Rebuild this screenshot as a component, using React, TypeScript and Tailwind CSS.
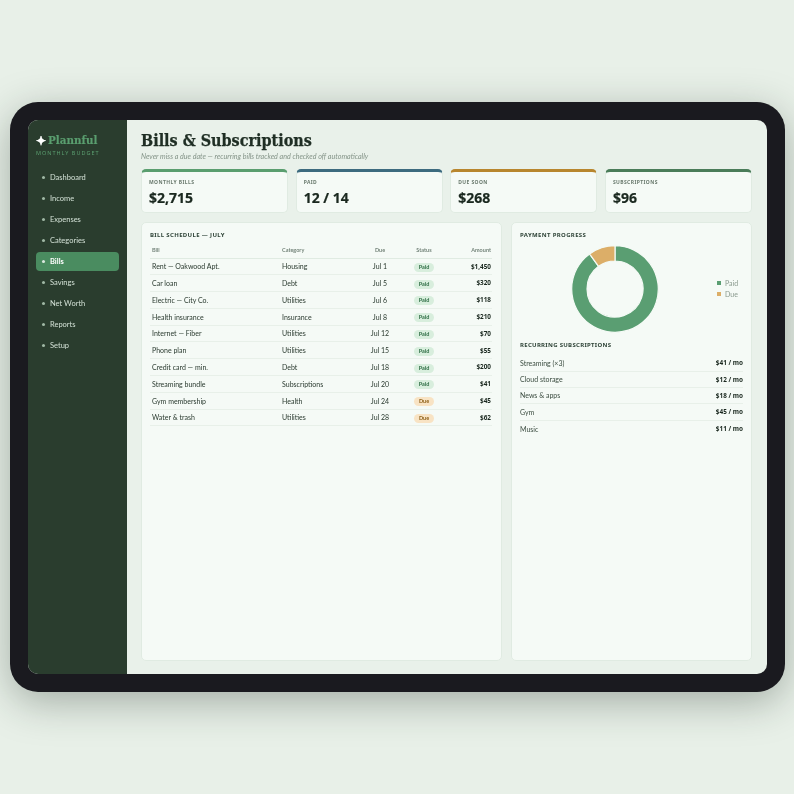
import React from 'react';

const navItems = ['Dashboard', 'Income', 'Expenses', 'Categories', 'Bills', 'Savings', 'Net Worth', 'Reports', 'Setup'];

const stats = [
  { label: 'Monthly Bills', value: '$2,715', bar: 'border-t-[#5a9e6f]' },
  { label: 'Paid', value: '12 / 14', bar: 'border-t-[#3d6b7f]' },
  { label: 'Due Soon', value: '$268', bar: 'border-t-[#b8862e]' },
  { label: 'Subscriptions', value: '$96', bar: 'border-t-[#4a7c59]' },
];

const bills = [
  ['Rent — Oakwood Apt.', 'Housing', 'Jul 1', 'Paid', '$1,450'],
  ['Car loan', 'Debt', 'Jul 5', 'Paid', '$320'],
  ['Electric — City Co.', 'Utilities', 'Jul 6', 'Paid', '$118'],
  ['Health insurance', 'Insurance', 'Jul 8', 'Paid', '$210'],
  ['Internet — Fiber', 'Utilities', 'Jul 12', 'Paid', '$70'],
  ['Phone plan', 'Utilities', 'Jul 15', 'Paid', '$55'],
  ['Credit card — min.', 'Debt', 'Jul 18', 'Paid', '$200'],
  ['Streaming bundle', 'Subscriptions', 'Jul 20', 'Paid', '$41'],
  ['Gym membership', 'Health', 'Jul 24', 'Due', '$45'],
  ['Water & trash', 'Utilities', 'Jul 28', 'Due', '$62'],
];

const subscriptions = [
  ['Streaming (×3)', '$41 / mo'],
  ['Cloud storage', '$12 / mo'],
  ['News & apps', '$18 / mo'],
  ['Gym', '$45 / mo'],
  ['Music', '$11 / mo'],
];

const Donut = () => (
  <svg width="90" height="90" viewBox="0 0 90 90">
    <path d="M45 1.7 A43.3 43.3 0 1 1 19.55 9.97 L28.55 22.35 A28 28 0 1 0 45 17 Z" fill="#5a9e72" stroke="#f4faf5" strokeWidth="1.2" />
    <path d="M45 1.7 A43.3 43.3 0 0 0 19.55 9.97 L28.55 22.35 A28 28 0 0 1 45 17 Z" fill="#dcae68" stroke="#f4faf5" strokeWidth="1.2" />
  </svg>
);

export default function App() {
  return (
    <div className="w-[794px] h-[794px] bg-[#e8f0e8] pl-[10px] pt-[102px] overflow-hidden antialiased font-['Lato','Noto_Sans',sans-serif]">
      {/* Device frame */}
      <div className="w-[775px] h-[590px] bg-[#1a1a1f] rounded-[28px] p-[18px] shadow-[0_10px_40px_rgba(30,45,35,0.34)]">
        <div className="w-full h-full flex rounded-[10px] overflow-hidden bg-[#e9f1ea] blur-[0.25px]">
          {/* Sidebar */}
          <aside className="w-[99px] shrink-0 bg-[#2a3d2e] px-2 pt-[14px]">
            <div className="flex items-center gap-[2px] h-[14px] font-['DejaVu_Serif',serif] font-stretch-condensed not-italic font-bold text-[11.5px] leading-none text-[#5a9e6f] [-webkit-text-stroke:0.15px_#5a9e6f]">
              <span className="text-white text-[12px] [-webkit-text-stroke:0.15px_#ffffff]">✦</span>
              <span>Plannful</span>
            </div>
            <div className="mt-[1px] text-[5.5px] leading-[8px] tracking-[1px] font-['Noto_Sans',sans-serif] text-[#5a9e6f] whitespace-nowrap">MONTHLY BUDGET</div>
            <nav className="mt-[11px] flex flex-col gap-[2px]">
              {navItems.map((item) => (
                <div
                  key={item}
                  className={`h-[19px] flex items-center gap-[5px] pl-[6px] rounded-[4px] text-[7.5px] ${
                    item === 'Bills' ? 'bg-[#4a8c60] text-white font-bold' : 'text-[#d2e0d5]'
                  }`}
                >
                  <span className={`w-[3px] h-[3px] rounded-full ${item === 'Bills' ? 'bg-white/80' : 'bg-[#a0b8a5]'}`} />
                  {item}
                </div>
              ))}
            </nav>
          </aside>

          {/* Main */}
          <main className="flex-1 min-w-0 flex flex-col pl-[14px] pr-[15px] pt-[11px] pb-[13px]">
            <h1 className="font-['DejaVu_Serif',serif] font-stretch-condensed not-italic font-bold text-[16px] leading-[20px] text-[#1f2e24] [-webkit-text-stroke:0.25px_#1f2e24]">Bills &amp; Subscriptions</h1>
            <p className="mt-[1px] text-[7.15px] leading-[10px] italic text-[#849488]">Never miss a due date — recurring bills tracked and checked off automatically</p>

            <div className="mt-[7px] grid grid-cols-4 gap-[7.5px]">
              {stats.map((stat) => (
                <div key={stat.label} className={`h-[44px] rounded-[5px] border border-[#e0ebe2] border-t-[3px] ${stat.bar} bg-[#f5faf6] px-[7px] pt-[5.5px]`}>
                  <div className="font-['Noto_Sans',sans-serif] text-[5px] leading-[8px] font-bold uppercase tracking-[0.4px] text-[#6a7a6e]">{stat.label}</div>
                  <div className="mt-[3.5px] font-['Noto_Sans',sans-serif] text-[14px] leading-[18px] font-bold text-[#1a281f] [-webkit-text-stroke:0.2px_#1a281f]">{stat.value}</div>
                </div>
              ))}
            </div>

            <div className="mt-[9px] flex-1 grid grid-cols-[361px_241px] gap-[9px]">
              {/* Bill schedule */}
              <section className="rounded-[5px] border border-[#e0ebe2] bg-[#f5faf6] px-[8px] pt-[7.5px]">
                <h2 className="font-['Noto_Sans',sans-serif] text-[6px] leading-[9px] font-bold uppercase tracking-[0.35px] text-[#2f4438]">Bill Schedule — July</h2>
                <table className="mt-[3.5px] w-[342px] table-fixed text-[7px] text-[#2a3a2f]">
                  <colgroup>
                    <col className="w-[132px]" />
                    <col className="w-[76px]" />
                    <col className="w-[44px]" />
                    <col className="w-[44px]" />
                    <col className="w-[46px]" />
                  </colgroup>
                  <thead>
                    <tr className="h-[15px] border-b border-[#e0ebe2] text-[5.5px] text-[#74847a]">
                      <th className="pl-[2px] text-left font-bold">Bill</th>
                      <th className="text-left font-bold">Category</th>
                      <th className="text-center font-bold">Due</th>
                      <th className="text-center font-bold">Status</th>
                      <th className="pr-[1px] text-right font-bold">Amount</th>
                    </tr>
                  </thead>
                  <tbody>
                    {bills.map(([name, category, due, status, amount]) => (
                      <tr key={name} className="h-[16.8px] border-b border-[#e8f0e9]">
                        <td className="pl-[2px]">{name}</td>
                        <td>{category}</td>
                        <td className="text-center">{due}</td>
                        <td className="text-center">
                          <span
                            className={`inline-block w-[20px] rounded-full text-[5.5px] leading-[9px] font-bold ${
                              status === 'Paid' ? 'bg-[#d8eedd] text-[#2f6e45]' : 'bg-[#f8e3c4] text-[#8f6118]'
                            }`}
                          >
                            {status}
                          </span>
                        </td>
                        <td className="pr-[1px] text-right font-['Noto_Sans',sans-serif] text-[6.4px] font-bold text-[#1a281f]">{amount}</td>
                      </tr>
                    ))}
                  </tbody>
                </table>
              </section>

              {/* Payment progress */}
              <section className="rounded-[5px] border border-[#e0ebe2] bg-[#f5faf6] px-[8px] pt-[7.5px]">
                <h2 className="font-['Noto_Sans',sans-serif] text-[6px] leading-[9px] font-bold uppercase tracking-[0.35px] text-[#2f4438]">Payment Progress</h2>
                <div className="mt-[4px] flex items-center">
                  <div className="ml-[50px]">
                    <Donut />
                  </div>
                  <div className="ml-[56.5px] flex flex-col gap-[3px] text-[7px] leading-[8px] text-[#8a9a8e]">
                    <div className="flex items-center gap-[4px]"><span className="w-[4.5px] h-[4.5px] bg-[#5a9e72]" />Paid</div>
                    <div className="flex items-center gap-[4px]"><span className="w-[4.5px] h-[4.5px] bg-[#dcae68]" />Due</div>
                  </div>
                </div>
                <h2 className="mt-[7px] font-['Noto_Sans',sans-serif] text-[6px] leading-[9px] font-bold uppercase tracking-[0.3px] text-[#2f4438]">Recurring Subscriptions</h2>
                <div className="mt-[6px]">
                  {subscriptions.map(([name, price], i) => (
                    <div key={name} className={`h-[16.3px] flex items-center justify-between text-[7px] text-[#3a4b3f] ${i < 4 ? 'border-b border-[#e8f0e9]' : ''}`}>
                      <span>{name}</span>
                      <span className="font-['Noto_Sans',sans-serif] text-[6.4px] font-bold text-[#1a281f]">{price}</span>
                    </div>
                  ))}
                </div>
              </section>
            </div>
          </main>
        </div>
      </div>
    </div>
  );
}
